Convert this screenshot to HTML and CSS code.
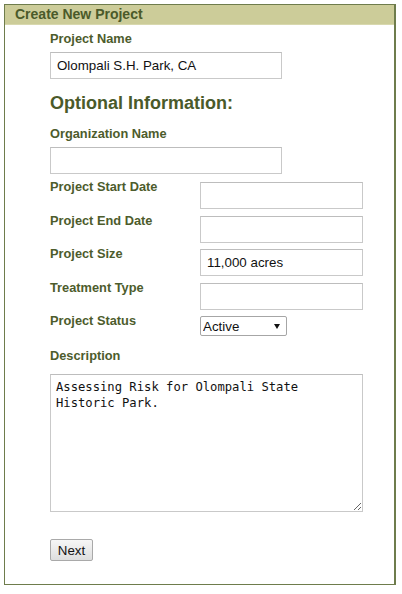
FILE: index.html
```html
<!DOCTYPE html>
<html>
<head>
<meta charset="utf-8">
<link rel="stylesheet" href="styles.css">
</head>
<body>
<div class="panel">
  <div class="panel-head">Create New Project</div>
  <div class="panel-body">
    <div class="label first">Project Name</div>
    <input class="text wide" type="text" value="Olompali S.H. Park, CA">
    <h2 class="section">Optional Information:</h2>
    <div class="label">Organization Name</div>
    <input class="text wide" type="text" value="">
    <div class="rows">
      <div class="row-label">Project Start Date</div>
      <input class="text narrow" type="text" value="">
      <div class="row-label">Project End Date</div>
      <input class="text narrow" type="text" value="">
      <div class="row-label">Project Size</div>
      <input class="text narrow" type="text" value="11,000 acres">
      <div class="row-label">Treatment Type</div>
      <input class="text narrow" type="text" value="">
      <div class="row-label">Project Status</div>
      <div class="select-wrap">
        <select class="select"><option>Active</option><option>Inactive</option></select>
        <svg class="caret" width="6" height="5" viewBox="0 0 6 5"><path d="M0 0H6L3 5Z" fill="#111"/></svg>
      </div>
    </div>
    <div class="label desc">Description</div>
    <textarea class="area">Assessing Risk for Olompali State Historic Park.</textarea>
    <button class="btn" type="button">Next</button>
  </div>
</div>
</body>
</html>
```
FILE: styles.css
```css
html, body {
  margin: 0;
  padding: 0;
  background: #ffffff;
}
body {
  font-family: "Liberation Sans", Arial, sans-serif;
}
.panel {
  margin: 4px 0 0 4px;
  width: 392px;
  height: 581px;
  box-sizing: border-box;
  border: 1px solid #6e7c4c;
  border-right-width: 2px;
}
.panel-head {
  height: 19px;
  background: #cccc99;
  border-bottom: 1px solid #d8d8ae;
  color: #4a5a2a;
  font-weight: bold;
  font-size: 14px;
  line-height: 19px;
  padding-left: 10px;
}
.panel-body {
  padding-left: 45px;
  display: flex;
  flex-direction: column;
  align-items: flex-start;
}
.label {
  color: #4d5c2c;
  font-weight: bold;
  font-size: 12.8px;
  line-height: 14px;
  margin-top: 13px;
}
.label.first {
  margin-top: 7px;
}
.text {
  box-sizing: border-box;
  height: 27px;
  border: 1px solid #c9c9c9;
  border-top-color: #bdbdbd;
  padding: 0 6px;
  font-family: "Liberation Sans", Arial, sans-serif;
  font-size: 13.33px;
  color: #111;
  background: #fff;
  margin: 0;
  outline: none;
}
.wide {
  width: 232px;
  margin-top: 6px;
}
.section {
  color: #4a5a2a;
  font-size: 18px;
  line-height: 21px;
  font-weight: bold;
  margin: 14px 0 0 0;
}
.rows {
  display: grid;
  grid-template-columns: 150px 163px;
  row-gap: 6.5px;
  margin-top: 8px;
}
.row-label {
  color: #4d5c2c;
  font-weight: bold;
  font-size: 12.8px;
  line-height: 14px;
  margin-top: -2px;
}
.narrow {
  width: 163px;
}
.select-wrap {
  position: relative;
  width: 87px;
  height: 20px;
}
.select {
  appearance: none;
  -webkit-appearance: none;
  box-sizing: border-box;
  width: 87px;
  height: 20px;
  border: 1px solid #a6a6a6;
  border-radius: 2px;
  background: #fff;
  font-family: "Liberation Sans", Arial, sans-serif;
  font-size: 13.33px;
  color: #111;
  padding: 0 0 0 2px;
  margin: 0;
  outline: none;
}
.caret {
  position: absolute;
  left: 74px;
  top: 8px;
  pointer-events: none;
}
.label.desc {
  margin-top: 13px;
}
.area {
  box-sizing: border-box;
  width: 313px;
  height: 138px;
  margin: 11px 0 0 0;
  border: 1px solid #c9c9c9;
  border-top-color: #bdbdbd;
  padding: 5px 5px;
  font-family: "DejaVu Sans Mono", "Liberation Mono", monospace;
  font-size: 12.2px;
  line-height: 15.5px;
  color: #111;
  outline: none;
}
.btn {
  margin-top: 27px;
  box-sizing: border-box;
  width: 43px;
  height: 22px;
  padding: 0;
  border: 1px solid #a9a9a9;
  border-radius: 2px;
  background: linear-gradient(#f6f6f6, #dedede);
  font-family: "Liberation Sans", Arial, sans-serif;
  font-size: 13.33px;
  color: #111;
}
```
